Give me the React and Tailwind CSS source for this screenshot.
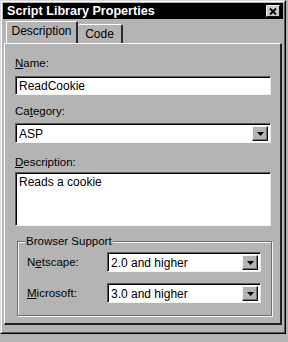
const font = "font-['Liberation_Sans',Arial,sans-serif]";

function DropButton() {
  return (
    <div className="flex h-full w-[16px] items-center justify-center border border-t-[#f4f4f4] border-l-[#f4f4f4] border-b-[#101010] border-r-[#101010] bg-[#b4b4b4] shadow-[inset_-1px_-1px_#707070]">
      <svg width="7" height="4" viewBox="0 0 7 4">
        <path d="M0 0h7L3.5 4z" fill="#000" />
      </svg>
    </div>
  );
}

function Field({ value, className = "" }) {
  return (
    <div
      className={`flex items-center border border-t-[#5a5a5a] border-l-[#5a5a5a] border-b-[#f4f4f4] border-r-[#e8e8e8] bg-white shadow-[inset_1px_1px_#000] ${className}`}
    >
      <span className="pl-[3px] pt-[1px] text-[12px] leading-[14px]">{value}</span>
    </div>
  );
}

function Select({ value, className = "" }) {
  return (
    <div
      className={`flex items-stretch border border-t-[#5a5a5a] border-l-[#5a5a5a] border-b-[#f4f4f4] border-r-[#e8e8e8] bg-white pt-[2px] pr-[2px] pb-[1px] pl-[2px] shadow-[inset_1px_1px_#000] ${className}`}
    >
      <span className="flex flex-1 items-center pl-[1px] text-[12px] leading-[14px]">{value}</span>
      <DropButton />
    </div>
  );
}

function Label({ pre, u, post, className = "" }) {
  return (
    <div className={`h-[14px] text-[11.5px] leading-[14px] ${className}`}>
      {pre}
      <u className="underline-offset-[1px]">{u}</u>
      {post}
    </div>
  );
}

export default function App() {
  return (
    <div className={`h-[342px] w-[288px] bg-[#b4b4b4] text-black ${font}`}>
      <div className="h-[334px] w-[286px] border border-t-[#d8d8d8] border-l-[#d8d8d8] border-b-[#000] border-r-[#000]">
        <div className="flex h-full flex-col border border-t-white border-l-white border-b-[#5a5a5a] border-r-[#5a5a5a] px-[1px] pt-[1px]">
          <div className="flex h-[16px] items-center justify-between bg-black pl-[4px] pr-[3px]">
            <span className="text-[12.6px] font-bold leading-[16px] text-white">Script Library Properties</span>
            <div className="flex h-[12px] w-[14px] items-center justify-center border border-t-[#f4f4f4] border-l-[#f4f4f4] border-b-[#101010] border-r-[#101010] bg-[#c8c8c8]">
              <svg width="8" height="7" viewBox="0 0 8 7">
                <path d="M1 0.5L7 6.5M7 0.5L1 6.5" stroke="#000" strokeWidth="1.8" />
              </svg>
            </div>
          </div>

          <div className="mt-[3px] flex h-[21px] items-end pl-[3px]">
            <div className="relative z-10 flex h-[22px] w-[72px] items-start justify-center rounded-t-[2px] border-t border-l border-r-2 border-t-white border-l-white border-r-[#2a2a2a] bg-[#b4b4b4] pt-[2px] text-[12px] leading-[14px]">
              Description
            </div>
            <div className="flex h-[19px] w-[45px] items-start justify-center rounded-t-[2px] border-t border-r-2 border-t-white border-r-[#2a2a2a] pt-[2px] text-[12px] leading-[14px]">
              Code
            </div>
          </div>

          <div className="ml-[1px] flex h-[282px] w-[278px] flex-col border-t border-l border-r-2 border-b-2 border-t-white border-l-white border-r-[#202020] border-b-[#202020] pl-[10px] pr-[7px] pt-[12px]">
            <Label pre="" u="N" post="ame:" />
            <Field value="ReadCookie" className="mt-[6px] h-[19px] w-[256px]" />

            <Label pre="Ca" u="t" post="egory:" className="mt-[9px]" />
            <Select value="ASP" className="mt-[5px] h-[20px] w-[256px]" />

            <Label pre="" u="D" post="escription:" className="mt-[12px]" />
            <div className="mt-[3px] h-[54px] w-[256px] border border-t-[#5a5a5a] border-l-[#5a5a5a] border-b-[#f4f4f4] border-r-[#e8e8e8] bg-white pl-[3px] pt-[2px] text-[12px] leading-[14px] shadow-[inset_1px_1px_#000]">
              Reads a cookie
            </div>

            <div className="relative ml-[2px] mt-[15px] h-[75px] w-[255px] border border-[#6e6e6e] shadow-[inset_1px_1px_#f4f4f4,1px_1px_#f4f4f4] pl-[9px] pr-[10px] pt-[10px]">
              <span className="absolute left-[7px] top-[-8px] bg-[#b4b4b4] px-[1px] text-[11.5px] leading-[14px]">
                Browser Support
              </span>
              <div className="flex h-[20px] items-center justify-between">
                <Label pre="N" u="e" post="tscape:" />
                <Select value="2.0 and higher" className="h-[20px] w-[154px]" />
              </div>
              <div className="mt-[11px] flex h-[20px] items-center justify-between">
                <Label pre="" u="M" post="icrosoft:" />
                <Select value="3.0 and higher" className="h-[20px] w-[154px]" />
              </div>
            </div>
          </div>
        </div>
      </div>
    </div>
  );
}
